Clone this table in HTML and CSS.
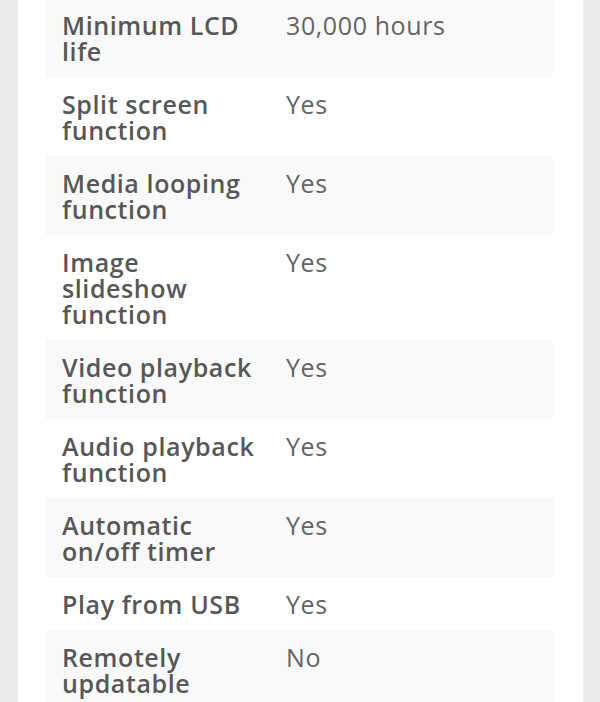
FILE: index.html
```html
<!DOCTYPE html>
<html>
<head>
<meta charset="utf-8">
<link rel="stylesheet" href="styles.css">
</head>
<body>
<div class="panel">
  <div class="specs">
    <div class="row alt first"><div class="k">Minimum LCD life</div><div class="v">30,000 hours</div></div>
    <div class="row"><div class="k">Split screen function</div><div class="v">Yes</div></div>
    <div class="row alt"><div class="k">Media looping function</div><div class="v">Yes</div></div>
    <div class="row"><div class="k">Image slideshow function</div><div class="v">Yes</div></div>
    <div class="row alt"><div class="k">Video playback function</div><div class="v">Yes</div></div>
    <div class="row"><div class="k">Audio playback function</div><div class="v">Yes</div></div>
    <div class="row alt"><div class="k">Automatic on/off timer</div><div class="v">Yes</div></div>
    <div class="row"><div class="k">Play from USB</div><div class="v">Yes</div></div>
    <div class="row alt"><div class="k">Remotely updatable</div><div class="v">No</div></div>
  </div>
</div>
</body>
</html>
```
FILE: styles.css
```css
html, body {
  margin: 0;
  padding: 0;
  background: #ececec;
  height: 702px;
  overflow: hidden;
}
body {
  padding: 0 17px 0 18px;
  font-family: "Open Sans", "Noto Sans", sans-serif;
}
.panel {
  background: #fff;
  padding: 0 30px 0 28px;
  height: 702px;
}
.specs {
  display: flex;
  flex-direction: column;
}
.row {
  display: grid;
  grid-template-columns: 224px 1fr;
  font-size: 25px;
  line-height: 26px;
  padding: 14px 0 13px;
}
.row.first {
  padding-top: 12px;
}
.row.alt {
  background: #f9f9f9;
}
.k {
  padding: 0 4px 0 16px;
  color: #575757;
  font-weight: 600;
  letter-spacing: 0.6px;
}
.v {
  padding: 0 16px;
  color: #646464;
  letter-spacing: 0.6px;
}
```
